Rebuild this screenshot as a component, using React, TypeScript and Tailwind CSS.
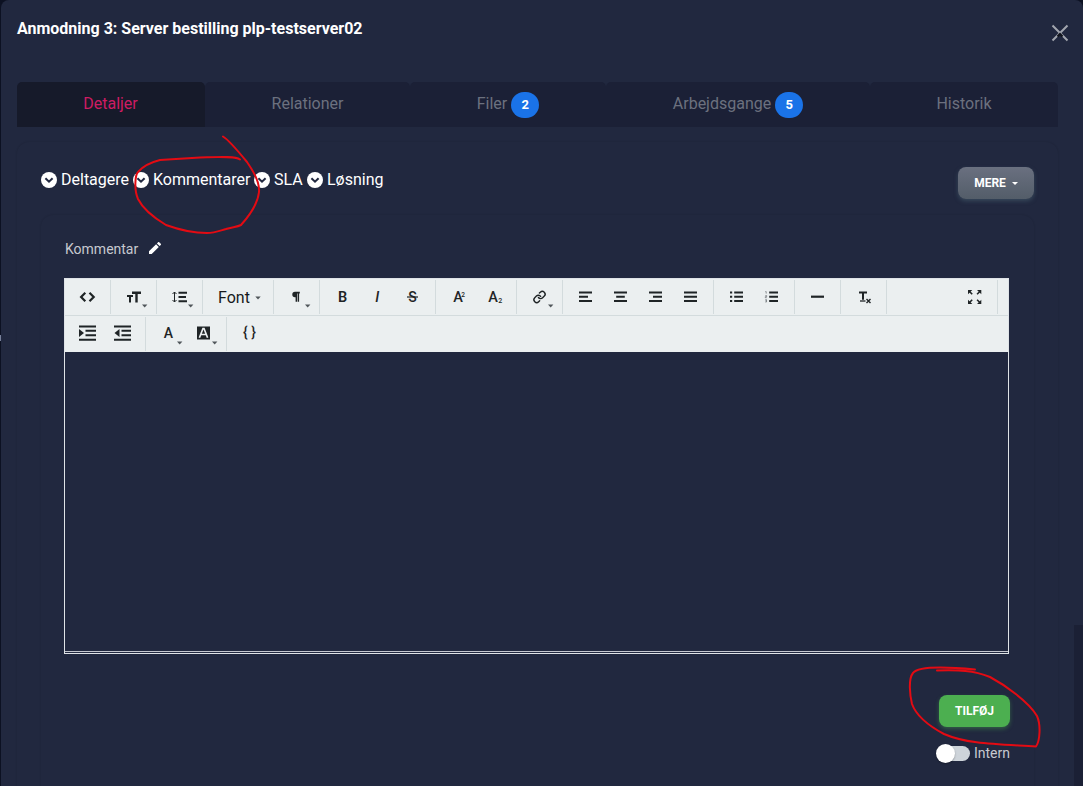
import React from "react";

type Kids = { children: React.ReactNode };

function Chevron() {
  return (
    <svg className="mr-[4px] h-4 w-4 shrink-0" viewBox="0 0 16 16">
      <circle cx="8" cy="8" r="8" fill="#fff" />
      <path d="M4.4 6.300 8 9.700l3.600-3.400" fill="none" stroke="#20273f" strokeWidth="2" />
    </svg>
  );
}

function Section({ label, width }: { label: string; width: string }) {
  return (
    <a className={`flex shrink-0 items-center whitespace-nowrap ${width}`}>
      <Chevron />
      {label}
    </a>
  );
}

function Group({ children, last }: Kids & { last?: boolean }) {
  return (
    <div className={`my-px flex h-[34px] shrink-0 items-center px-[5px] ${last ? "" : "border-r border-[#d3dbdd]"}`}>
      {children}
    </div>
  );
}

function Tool({ children, menu }: Kids & { menu?: boolean }) {
  return (
    <button className="flex h-[34px] w-[35px] items-start justify-center">
      <svg className="h-[34px] w-[35px]" viewBox="0 1 35 34" fill="none" stroke="#1f2426" strokeWidth="2">
        {children}
        {menu && <path d="M26 25.4h5.400L28.700 28.400z" fill="#50565a" stroke="none" />}
      </svg>
    </button>
  );
}

function Glyph({ x, y, size, text, weight = 500, italic = false }: { x: number; y: number; size: number; text: string; weight?: number; italic?: boolean }) {
  return (
    <text x={x} y={y} textAnchor="middle" fontSize={size} fontWeight={weight} fontStyle={italic ? "italic" : "normal"} fill="#1f2426" stroke="none">
      {text}
    </text>
  );
}

const tabStyle = "flex shrink-0 items-center justify-center rounded-t-[5px] pb-[2px] text-[#6c717f] bg-[#1b2036]";

function Badge({ children }: Kids) {
  return (
    <span className="relative top-px ml-[4px] flex h-[26px] w-7 items-center justify-center rounded-full bg-[#1a73e8] text-[13px] font-bold text-white">
      {children}
    </span>
  );
}

function Toolbar() {
  return (
    <div className="h-[73px] bg-[#ebeff0]">
      <div className="flex h-[37px] border-b border-[#d3dbdd]">
        <Group><Tool><path d="m15.300 13.800-4.200 4.200 4.200 4.200M19.500 13.800l4.200 4.200-4.200 4.200" strokeWidth="2.200" /></Tool></Group>
        <Group>
          <Tool menu>
            <path d="M16 13.700h9M20.500 13.700v9.800" strokeWidth="2.400" />
            <path d="M11 17h6M14 17v6.500" strokeWidth="2" />
          </Tool>
        </Group>
        <Group>
          <Tool menu>
            <path d="M16.500 13.800H25M16.500 18H24M16.500 22.200H25" strokeWidth="2.100" />
            <path d="M12.500 13v10M10.500 15l2-2 2 2M10.500 21l2 2 2-2" strokeWidth="1" />
          </Tool>
        </Group>
        <Group>
          <button className="flex h-[34px] w-[60px] items-center pt-px pl-[10px] text-[16px] text-[#17191b]">
            Font
            <svg className="ml-[5px] h-[4px] w-[6px]" viewBox="0 0 6 4"><path d="M.3.5h5.400L3 3.500z" fill="#50565a" /></svg>
          </button>
        </Group>
        <Group><Tool menu><path d="M20.800 12.800H16a2.700 2.700 0 0 0 0 5.400h.6v4.500h1.600v-8.300h.6v8.300h1.300v-8.300h.7z" fill="#1f2426" stroke="none" /></Tool></Group>
        <Group>
          <Tool><Glyph x={17.5} y={23} size={14.5} weight={600} text="B" /></Tool>
          <Tool><Glyph x={17.2} y={23} size={14.5} italic text="I" /></Tool>
          <Tool><Glyph x={17.5} y={23} size={14} text="S" /><path d="M12 18h11" strokeWidth="1.200" /></Tool>
        </Group>
        <Group>
          <Tool><Glyph x={17} y={23} size={14.5} text="A" /><Glyph x={22} y={17.5} size={6.5} text="2" /></Tool>
          <Tool><Glyph x={17} y={23} size={14.5} text="A" /><Glyph x={24.3} y={24.3} size={7} text="2" /></Tool>
        </Group>
        <Group>
          <Tool menu>
            <g transform="translate(10.800 11.200) scale(.56)" strokeWidth="2.500" strokeLinecap="round">
              <path d="M10 13a5 5 0 0 0 7.540.540l3-3a5 5 0 0 0-7.070-7.070l-1.720 1.710" />
              <path d="M14 11a5 5 0 0 0-7.540-.540l-3 3a5 5 0 0 0 7.070 7.070l1.710-1.710" />
            </g>
          </Tool>
        </Group>
        <Group>
          <Tool><path d="M11 13.500h13M11 17.700h9M11 22h13" /></Tool>
          <Tool><path d="M11 13.500h13M13.200 17.700h8.600M11 22h13" /></Tool>
          <Tool><path d="M11 13.500h13M15 17.700h9M11 22h13" /></Tool>
          <Tool><path d="M11 13.500h13M11 17.700h13M11 22h13" /></Tool>
        </Group>
        <Group>
          <Tool><path d="M15.200 13.500H24M15.200 17.700H24M15.200 22H24M11 13.500h2.200M11 17.700h2.200M11 22h2.200" /></Tool>
          <Tool>
            <path d="M15.200 13.500H24M15.200 17.700H24M15.200 22H24" />
            <path d="M11.300 12.600h.9v2M11.300 16.600h1.400v1.100h-1.400v1h1.400M11.300 20.600h1.200v2.400h-1.200M11.300 21.800h1.200" strokeWidth=".7" stroke="#666c70" />
          </Tool>
        </Group>
        <Group><Tool><path d="M11 17.700h13" strokeWidth="2.200" /></Tool></Group>
        <Group>
          <Tool>
            <path d="M13 13.400h8M17 13.400v7.300" />
            <path d="M14 22h5.500" strokeWidth="1.300" />
            <path d="m20.500 20 4 4M24.500 20l-4 4" strokeWidth="1.400" />
          </Tool>
        </Group>
        <div className="flex-1" />
        <Group>
          <Tool>
            <path d="m12 12 3.200 3.200M23.300 12l-3.200 3.200M12 24l3.200-3.200M23.300 24l-3.200-3.200" strokeWidth="1.600" />
            <path d="M11 11h4.300L11 15.300zM24.300 11H20l4.300 4.300zM11 25h4.300L11 20.700zM24.300 25H20l4.300-4.300z" fill="#1f2426" stroke="none" />
          </Tool>
        </Group>
        <div className="w-[10px]" />
      </div>
      <div className="flex h-[36px]">
        <Group>
          <Tool><path d="M9 10.500h17M15.500 14.700H26M15.500 19.200H26M9 23.700h17" strokeWidth="2.100" /><path d="m9 13 5 4-5 4z" fill="#1f2426" stroke="none" /></Tool>
          <Tool><path d="M9 10.500h17M16.500 14.700H26M16.500 19.200H26M9 23.700h17" strokeWidth="2.100" /><path d="m14.500 13-5 4 5 4z" fill="#1f2426" stroke="none" /></Tool>
        </Group>
        <Group>
          <Tool menu><Glyph x={17.5} y={22} size={14} text="A" /></Tool>
          <Tool menu>
            <rect x="11" y="10.500" width="13" height="13" fill="#1f2426" stroke="none" />
            <path d="m13.400 21.800 3.600-9.300h1l3.600 9.300M14.800 18.500h5.400" stroke="#ebeff0" strokeWidth="1.700" />
          </Tool>
        </Group>
        <Group last><Tool><Glyph x={17.5} y={21} size={14} text="{ }" /></Tool></Group>
      </div>
    </div>
  );
}

function Markings() {
  return (
    <svg className="pointer-events-none absolute inset-0 h-[786px] w-[1083px]" viewBox="0 0 1083 786" fill="none" stroke="#e30b13" strokeWidth="2" strokeLinecap="round" strokeLinejoin="round">
      <path d="M223 136.500C229 140 238 151 247 162C254 172 260 182 259 192C258 202 250 215 241 225C237 227 232 227 226 229C219 231 214 233 207 233C192 233 177 229 166 225C156 219 143 209 138 199C134 190 135 175 138 172C144 165 152 162 160 160L200 157.500C219 157 235 156 240 159.500" />
      <path d="M975 669.500C949 667 918 666 913 673C908 679 910 696 912 704C916 715 929 726 944 734C967 744 995 744 1036 746.500C1040 741 1041 725 1037 716C1029 702 1005 685 990 677C973 670 959 670 937 670.500" />
    </svg>
  );
}

export default function App() {
  return (
    <div className="relative h-[786px] w-[1083px] overflow-hidden bg-[#0c1122] pl-px font-['Roboto',sans-serif]">
      <div className="h-[786px] rounded-t-[8px] bg-[#21283f] pl-4">
        <header className="flex h-[82px] justify-between pr-[14px]">
          <h1 className="pt-[17px] text-[16px] leading-[24px] font-bold text-white">Anmodning 3: Server bestilling plp-testserver02</h1>
          <svg className="mt-[24px] h-[18px] w-[18px]" viewBox="0 0 18 18">
            <path d="m1.500 1.500 15 15M16.500 1.500l-15 15" stroke="#a2a6af" strokeWidth="2" />
            <path d="m6.500 12.500 2.500-2.500 2.500 2.500" fill="none" stroke="#11141d" strokeWidth="2.200" />
          </svg>
        </header>
        <nav className="flex h-[45px] w-[1041px] text-[16px]">
          <div className="flex w-[188px] shrink-0 items-center justify-center rounded-t-[5px] bg-[#161a2a] pr-px pb-[2px] text-[#ce1c63]">Detaljer</div>
          <div className={`${tabStyle} w-[205px]`}>Relationer</div>
          <div className={`${tabStyle} w-[196px]`}>Filer<Badge>2</Badge></div>
          <div className={`${tabStyle} w-[264px]`}>Arbejdsgange<Badge>5</Badge></div>
          <div className={`${tabStyle} w-[188px]`}>Historik</div>
        </nav>
        <main className="mt-[15px] h-[660px] w-[1041px] rounded-[12px] px-6 pt-[25px] shadow-[0_0_2px_rgba(0,0,0,0.18)]">
          <div className="flex h-[32px] justify-between">
            <div className="flex h-[25px] items-center text-[16px] text-white">
              <Section label="Deltagere" width="w-[92px]" />
              <Section label="Kommentarer" width="w-[121px]" />
              <Section label="SLA" width="w-[53px]" />
              <Section label="Løsning" width="w-[90px]" />
            </div>
            <button className="flex h-[32px] w-[76px] items-center justify-center rounded-[8px] bg-linear-to-b from-[#6a7080] to-[#535d69] text-[12px] font-bold text-white shadow-[0_2px_4px_rgba(78,105,120,0.5)]">
              MERE
              <svg className="ml-[6px] h-[3px] w-[6px]" viewBox="0 0 6 3"><path d="M0 0h6L3 3z" fill="#fff" /></svg>
            </button>
          </div>
          <section className="mt-[16px] h-[590px] rounded-[12px] px-6 pt-[21px] shadow-[0_0_2px_rgba(0,0,0,0.16)]">
            <div className="flex h-[26px] items-center text-[14px] text-[#c7c9cf]">
              Kommentar
              <svg className="relative -top-px ml-[11px] h-3 w-3" viewBox="0 0 12 12" fill="#fff">
                <path d="M0 9.300 7.100 2.200l2.700 2.700L2.700 12H0zM7.900 1.400 9.100.2a.8.8 0 0 1 1.100 0l1.600 1.600a.8.8 0 0 1 0 1.100l-1.200 1.200z" />
              </svg>
            </div>
            <div className="-ml-px mt-[16px] h-[376px] w-[945px] border border-[#dfe3e7] bg-[#21283f]">
              <Toolbar />
              <div className="h-[300px] border-b border-[#c5c8d0]" />
            </div>
            <div className="mt-[41px] flex flex-col items-end">
              <button className="h-[32px] w-[71px] rounded-[8px] bg-[#4caf50] text-[12px] font-bold text-white shadow-[0_2px_4px_rgba(76,175,80,0.4)]">TILFØJ</button>
              <label className="mt-[16px] flex h-5 items-center text-[14px] text-[#c7c9cf]">
                <span className="mr-[4px] flex h-[15px] w-[33px] items-center rounded-full bg-[#ced4da]">
                  <span className="-ml-px h-[19px] w-[19px] shrink-0 rounded-full bg-white shadow-[0_1px_2px_rgba(0,0,0,0.3)]" />
                </span>
                Intern
              </label>
            </div>
          </section>
        </main>
      </div>
      <div className="absolute top-[625px] right-0 h-[161px] w-[9px] bg-[#1b2035]" />
      <div className="absolute top-[335px] left-0 h-[6px] w-px bg-[#77809a]" />
      <Markings />
    </div>
  );
}
